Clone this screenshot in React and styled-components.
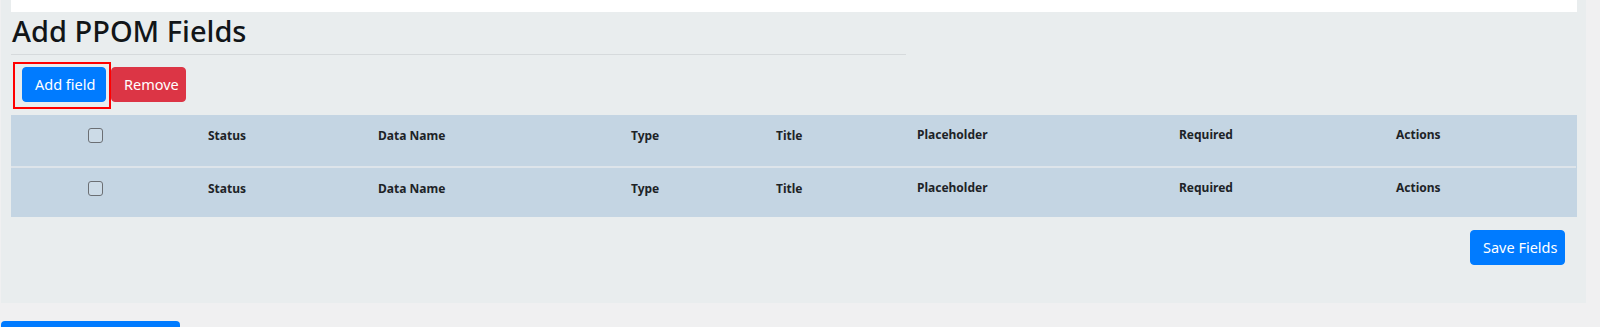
import React from "react";
import styled, { createGlobalStyle } from "styled-components";

const Global = createGlobalStyle`
  html, body { margin: 0; padding: 0; }
  body {
    background: #f0f0f1;
    font-family: "Noto Sans", "Open Sans", sans-serif;
    color: #1d2327;
    overflow: hidden;
  }
  * { box-sizing: border-box; }
`;

const Page = styled.div`
  padding-left: 1px;
  width: 1600px;
  height: 327px;
  overflow: hidden;
`;

const Panel = styled.section`
  width: 1585px;
  background: #e9edee;
  padding: 0 9px 38px 10px;
`;

const TopBar = styled.div`
  height: 12px;
  background: #ffffff;
`;

const Heading = styled.h1`
  width: 895px;
  margin: 3px 0 0;
  padding: 0 0 7px 1px;
  font-size: 29px;
  line-height: 32px;
  font-weight: 500;
  color: #111518;
  border-bottom: 1px solid #d6dadc;
`;

const Toolbar = styled.div`
  display: flex;
  align-items: flex-start;
  margin-top: 7px;
  padding-left: 2px;
`;

const Highlight = styled.div`
  border: 2px solid #ff0000;
  padding: 3px 3px 5px 7px;
  display: flex;
`;

const Button = styled.button`
  font-family: "Noto Sans", "Open Sans", sans-serif;
  font-size: 14.5px;
  line-height: 21px;
  height: 35px;
  padding: 0 12px;
  border-radius: 4px;
  border: 1px solid ${(p) => (p.$variant === "danger" ? "#dc3545" : "#007bff")};
  background: ${(p) => (p.$variant === "danger" ? "#dc3545" : "#007bff")};
  color: #fff;
  cursor: pointer;
  margin-top: ${(p) => p.$offset || 0}px;
  width: ${(p) => (p.$w ? `${p.$w}px` : "auto")};
  white-space: nowrap;
`;

const Table = styled.div`
  margin-top: 6px;
  display: grid;
  grid-template-columns: 185px 170px 253px 145px 141px 262px 217px 192px;
  background: #c4d5e3;
`;

const Cell = styled.div`
  padding: ${(p) => (p.$raised ? "11px 12px 13px" : "12px")};
  font-size: 12px;
  line-height: 18px;
  font-weight: 700;
  color: #1d2327;
  border-top: ${(p) => (p.$first ? "none" : "2px solid #dde4ea")};
  height: 51px;
`;

const CheckCell = styled(Cell)`
  padding-left: 77px;
  padding-top: 13px;
`;

const Check = styled.input`
  appearance: none;
  -webkit-appearance: none;
  margin: 0;
  width: 15px;
  height: 15px;
  border: 1.5px solid #6b6f74;
  border-radius: 3px;
  background: rgba(255, 255, 255, 0.15);
  display: block;
`;

const Footer = styled.div`
  display: flex;
  justify-content: flex-end;
  padding-right: 12px;
  margin-top: 13px;
`;

const BottomButton = styled.div`
  margin-top: 18px;
  width: 179px;
  height: 8px;
  background: #007bff;
  border-radius: 4px 4px 0 0;
`;

const columns = [
  { label: "Status" },
  { label: "Data Name" },
  { label: "Type" },
  { label: "Title" },
  { label: "Placeholder", raised: true },
  { label: "Required", raised: true },
  { label: "Actions", raised: true },
];

function Row({ first }) {
  return (
    <>
      <CheckCell $first={first}>
        <Check type="checkbox" />
      </CheckCell>
      {columns.map((c) => (
        <Cell key={c.label} $first={first} $raised={c.raised}>
          {c.label}
        </Cell>
      ))}
    </>
  );
}

export default function App() {
  return (
    <Page>
      <Global />
      <Panel>
        <TopBar />
        <Heading>Add PPOM Fields</Heading>
        <Toolbar>
          <Highlight>
            <Button $w={84}>Add field</Button>
          </Highlight>
          <Button $variant="danger" $offset={5} $w={75}>
            Remove
          </Button>
        </Toolbar>
        <Table>
          <Row first />
          <Row />
        </Table>
        <Footer>
          <Button $w={95}>Save Fields</Button>
        </Footer>
      </Panel>
      <BottomButton />
    </Page>
  );
}
